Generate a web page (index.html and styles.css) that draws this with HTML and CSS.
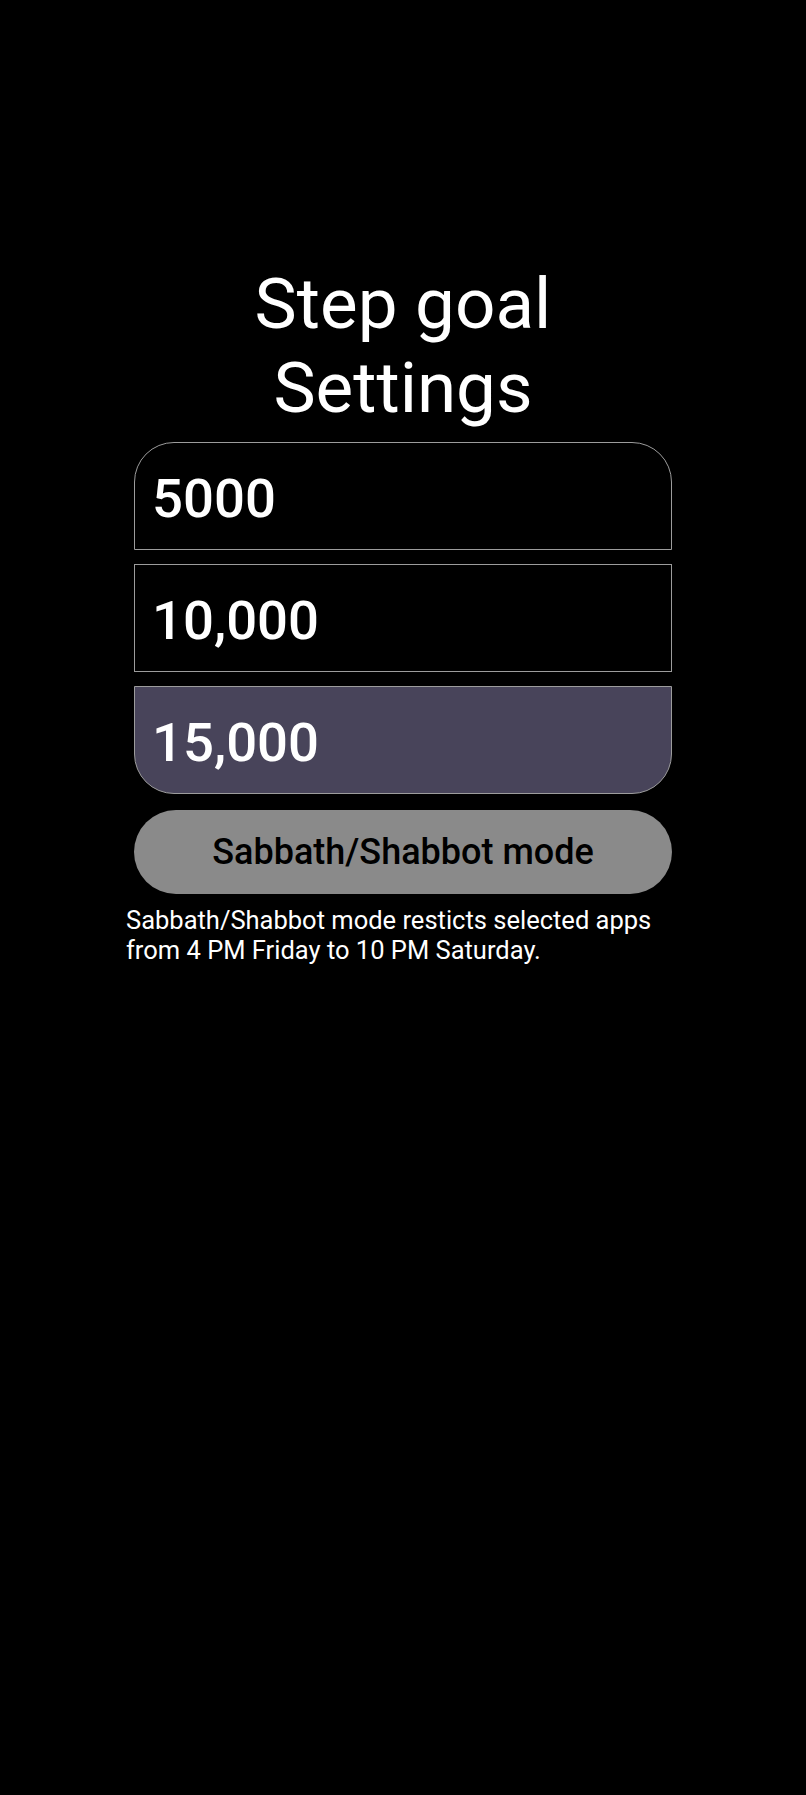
FILE: index.html
```html
<!DOCTYPE html>
<html lang="en">
<head>
    <meta charset="UTF-8">
    <meta name="viewport" content="width=device-width, initial-scale=1.0">
    <title>Step goal Settings</title>
    <link rel="stylesheet" href="styles.css">
</head>
<body>
    <div class="container">
        <h1>Step goal<br>Settings</h1>

        <!-- Choix de l'objectif -->
        <div class="goals">
            <div class="goal goal-first">5000</div>
            <div class="goal">10,000</div>
            <div class="goal goal-last selected">15,000</div>
        </div>

        <button class="sabbath-btn">Sabbath/Shabbot mode</button>
        <p class="note">Sabbath/Shabbot mode resticts selected apps<br>from 4 PM Friday to 10 PM Saturday.</p>
    </div>
</body>
</html>
```

FILE: styles.css
```css
html, body {
    background-color: #000;
}
body {
    font-family: Roboto, "Liberation Sans", sans-serif;
    color: #fff;
    margin: 0;
    padding: 0;
}
.container {
    width: 538px;
    margin: 0 auto;
    padding-top: 262px;
}
h1 {
    margin: 0 0 12px 0;
    text-align: center;
    font-weight: normal;
    font-size: 71px;
    line-height: 84px;
}
.goals {
    display: flex;
    flex-direction: column;
    gap: 14px;
}
.goal {
    height: 108px;
    border: 1px solid #9c9c9c;
    box-sizing: border-box;
    padding: 25px 0 0 17px;
    font-size: 54.5px;
    font-weight: 500;
    line-height: 60px;
}
.goal-first {
    border-radius: 40px 40px 0 0;
}
.goal-last {
    border-radius: 0 0 40px 40px;
}
.goal.selected {
    background-color: #48445a;
}
.sabbath-btn {
    display: block;
    width: 100%;
    height: 84px;
    margin-top: 16px;
    border: none;
    border-radius: 42px;
    background-color: #8a8a8a;
    color: #000;
    font-family: Roboto, "Liberation Sans", sans-serif;
    font-size: 36px;
    font-weight: 500;
    padding: 0;
}
.note {
    margin: 11px 0 0 -8px;
    font-size: 25.5px;
    line-height: 30px;
}
```
